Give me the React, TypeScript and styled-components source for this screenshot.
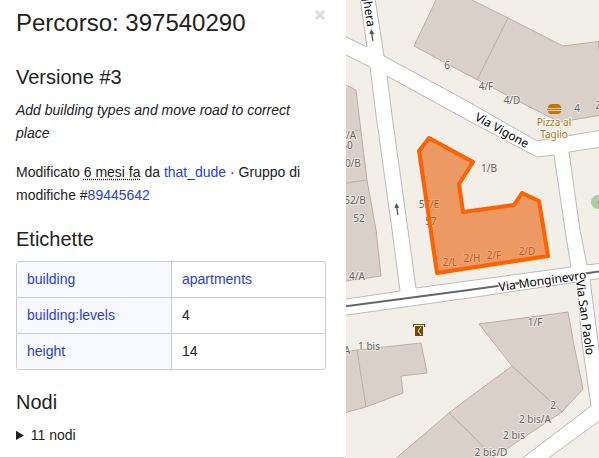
import React from "react";
import styled, { createGlobalStyle } from "styled-components";

const GlobalStyle = createGlobalStyle`
  *, *::before, *::after { box-sizing: border-box; }
  html, body, #root { height: 100%; }
  body {
    margin: 0;
    background: #fff;
    color: #222;
    font-family: "Liberation Sans", Arial, sans-serif;
    font-size: 14px;
    line-height: 23px;
  }
`;

const Page = styled.main`
  display: flex;
  min-height: 100%;
`;

const Sidebar = styled.section`
  flex: 0 0 346px;
  display: flex;
  flex-direction: column;
  border-bottom: 1px solid #ccc;
`;

const Content = styled.div`
  display: flex;
  flex-direction: column;
  padding: 8px 20px 8px 16px;
`;

const TitleRow = styled.header`
  display: flex;
  justify-content: space-between;
  align-items: flex-start;
  margin-bottom: 24px;
`;

const Title = styled.h1`
  margin: 0;
  font-size: 24px;
  line-height: 30px;
  font-weight: 400;
`;

const CloseButton = styled.button`
  display: flex;
  padding: 2px 0;
  border: 0;
  background: none;
  cursor: pointer;
`;

const Heading = styled.h2`
  margin: 0 0 7px;
  font-size: 20px;
  line-height: 30px;
  font-weight: 400;
`;

const Comment = styled.p`
  margin: 0 0 16px;
  font-style: italic;
`;

const Details = styled.p`
  margin: 0 0 17px;
`;

const When = styled.abbr`
  text-decoration: underline dotted;
  text-underline-offset: 2px;
`;

const Link = styled.a`
  color: #2a3fd8;
  text-decoration: none;
`;

const TagTable = styled.table`
  width: 100%;
  margin-bottom: 17px;
  border: 1px solid #ccc;
  border-radius: 3px;
  border-collapse: separate;
  border-spacing: 0;
  table-layout: fixed;

  tr + tr > * { border-top: 1px solid #ccc; }
`;

const Key = styled.th`
  padding: 6px 10px;
  background: #f8f9ff;
  text-align: left;
  font-weight: 400;
`;

const Value = styled.td`
  padding: 6px 10px;
  border-left: 1px solid #ccc;
`;

const Nodes = styled.details`
  summary { cursor: pointer; }
`;

const MapPane = styled.section`
  flex: 1 1 0;
  min-width: 0;
  display: flex;
  background: #fff;
`;

const MapSvg = styled.svg`
  flex: 1;
  min-width: 0;
  width: 100%;
  height: 100%;
  min-height: 100vh;
`;

const Block = styled.polygon`
  fill: #f2efe9;
  stroke: #bbb;
  stroke-width: 1;
`;

const Building = styled.polygon`
  fill: #d9d0c9;
  stroke: #c0aea0;
  stroke-width: 1;
`;

const Wall = styled.polyline`
  fill: none;
  stroke: #c0aea0;
  stroke-width: 1;
`;

const HouseNumber = styled.text`
  font-family: "Noto Sans", sans-serif;
  font-size: 10px;
  text-anchor: middle;
  fill: #666;
  stroke: #f2efe9;
  stroke-opacity: 0.8;
  stroke-width: 2px;
  stroke-linejoin: round;
  paint-order: stroke;
`;

const StreetName = styled.text`
  font-family: "Noto Sans", sans-serif;
  font-size: 12px;
  text-anchor: middle;
  fill: #000;
  stroke: #fff;
  stroke-width: 2px;
  stroke-linejoin: round;
  paint-order: stroke;
`;

const PlaceName = styled(HouseNumber)`
  fill: #b5730f;
  stroke: #fff;
`;

const blocks = [
  "340,-2 360,-2 367,47 340,34",
  "340,52 370,67 376,115 392,230 400,291 340,300",
  "375,-2 384,56 469,102 537,141 602,130 602,-2",
  "387,76 469,121 537,157 554,155 565,230 571,267 416,288 392,115",
  "569,152 602,147 602,263 587,265 580,230",
  "340,316 469,298 577,282 582,343 591,406 520,460 340,460",
  "590,280 602,278 602,372",
  "546,460 602,419 602,460",
];

const buildings = [
  "437,-2 414,46 470,76 545,115 560,122 602,115 602,41 563,46 508,18 468,-2",
  "340,82 356,90 359,115 367,180 376,230 381,276 340,282",
  "340,353 357,350 421,343 427,373 401,376 403,393 366,407 340,414",
  "479,324 568,312 574,345 583,389 562,412 512,366",
  "394,460 449,413 470,397 512,366 562,412 490,460",
];

const walls = [
  "508,18 477,80",
  "598,41 602,68",
  "340,133 361,130",
  "340,184 367,180",
  "357,350 366,407",
  "449,413 470,433 496,460",
];

const numbers: [string, number, number][] = [
  ["6", 447, 69],
  ["4/F", 486, 90],
  ["4/D", 512, 104],
  ["4", 577, 112],
  ["2", 598, 109],
  ["/A", 351, 139],
  ["50", 347, 149],
  ["50/B", 350, 167],
  ["52/B", 355, 204],
  ["52", 359, 222],
  ["4/A", 357, 280],
  ["1/B", 489, 172],
  ["57/E", 429, 208],
  ["57", 431, 225],
  ["2/L", 450, 266],
  ["2/H", 472, 262],
  ["2/F", 494, 259],
  ["2/D", 527, 255],
  ["1/F", 535, 326],
  ["1 bis", 369, 350],
  ["A", 347, 354],
  ["2", 553, 409],
  ["2 bis/A", 535, 423],
  ["2 bis", 514, 439],
  ["2 bis/D", 491, 456],
];

const OneWay = ({ x, y }: { x: number; y: number }) => (
  <g transform={`translate(${x} ${y}) rotate(-8)`} stroke="#555" fill="#555">
    <path d="M0 6V-2" strokeWidth="1.3" />
    <path d="M0-6 2.5-1H-2.5Z" stroke="none" />
  </g>
);

const TownMap = () => (
  <MapSvg
    viewBox="346 0 253 458"
    preserveAspectRatio="xMinYMin slice"
    role="img"
    aria-label="Mappa"
  >
    {blocks.map((p) => <Block key={p} points={p} />)}
    {buildings.map((p) => <Building key={p} points={p} />)}
    <Building points="429,138 473,162 459,184 463,212 514,205 522,193 539,201 548,256 437,273 419,151" />
    {walls.map((p) => <Wall key={p} points={p} />)}
    <path d="M340 307 469 290 602 271" fill="none" stroke="#666" strokeWidth="2" />
    <OneWay x={372} y={35} />
    <OneWay x={397} y={209} />
    {numbers.map(([label, x, y]) => (
      <HouseNumber key={`${label}-${x}`} x={x} y={y}>{label}</HouseNumber>
    ))}
    <StreetName transform="translate(500 134) rotate(29)">Via Vigone</StreetName>
    <StreetName transform="translate(543 285) rotate(-8)">Via Monginevro</StreetName>
    <path d="M516 284 519 283" stroke="#666" strokeWidth="2" />
    <StreetName transform="translate(581 318) rotate(82)">Via San Paolo</StreetName>
    <StreetName transform="translate(362 -9) rotate(82)">Via Borghera</StreetName>
    <PlaceName x="554" y="126">Pizza al</PlaceName>
    <PlaceName x="554" y="138">Taglio</PlaceName>
    <g fill="#c77400">
      <path d="M548 108q0-4 4-4h5q4 0 4 4Z" />
      <path d="M547 109h14v1h-14Z" />
      <path d="M548 111h13q0 3-3 3h-7q-3 0-3-3Z" />
    </g>
    <circle cx="598" cy="202" r="7" fill="#a9cca1" />
    <circle cx="599" cy="202" r="1" fill="#a0702a" />
    <g fill="#734a08">
      <path d="M413 324h12v3h-1v-2h-10v2h-1Z" />
      <path d="M415 326h8v10h-8Z" />
      <path d="M421 327 418 331 421 335" fill="none" stroke="#f2efe9" />
    </g>
    <polygon
      points="429,138 473,162 459,184 463,212 514,205 522,193 539,201 548,256 437,273 419,151"
      fill="#ff6200"
      fillOpacity="0.5"
      stroke="#ff6200"
      strokeWidth="4"
      strokeLinejoin="round"
    />
  </MapSvg>
);

export default function App() {
  return (
    <Page>
      <GlobalStyle />
      <Sidebar>
        <Content>
          <TitleRow>
            <Title>Percorso: 397540290</Title>
            <CloseButton type="button" aria-label="Chiudi">
              <svg width="12" height="10" viewBox="0 0 12 10">
                <path d="M2 1 10 9M10 1 2 9" stroke="#ddd" strokeWidth="3" />
              </svg>
            </CloseButton>
          </TitleRow>
          <Heading>Versione #3</Heading>
          <Comment>Add building types and move road to correct place</Comment>
          <Details>
            Modificato <When title="6 mesi fa">6 mesi fa</When> da{" "}
            <Link href="#that_dude">that_dude</Link> · Gruppo di modifiche #
            <Link href="#89445642">89445642</Link>
          </Details>
          <Heading>Etichette</Heading>
          <TagTable>
            <tbody>
              <tr>
                <Key scope="row"><Link href="#building">building</Link></Key>
                <Value><Link href="#apartments">apartments</Link></Value>
              </tr>
              <tr>
                <Key scope="row"><Link href="#levels">building:levels</Link></Key>
                <Value>4</Value>
              </tr>
              <tr>
                <Key scope="row"><Link href="#height">height</Link></Key>
                <Value>14</Value>
              </tr>
            </tbody>
          </TagTable>
          <Heading>Nodi</Heading>
          <Nodes>
            <summary>11 nodi</summary>
          </Nodes>
        </Content>
      </Sidebar>
      <MapPane>
        <TownMap />
      </MapPane>
    </Page>
  );
}
